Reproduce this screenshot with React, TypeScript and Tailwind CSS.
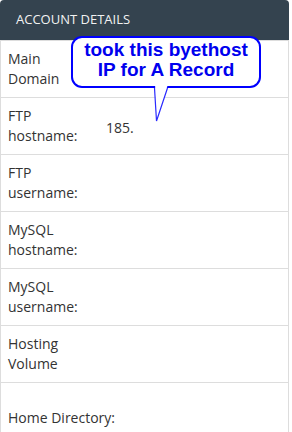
import React from "react";

type Row = { label: React.ReactNode; value?: string; tall?: boolean };

const rows: Row[] = [
  { label: <>Main<br />Domain</> },
  { label: <>FTP<br />hostname:</>, value: "185." },
  { label: <>FTP<br />username:</> },
  { label: <>MySQL<br />hostname:</> },
  { label: <>MySQL<br />username:</> },
  { label: <>Hosting<br />Volume</> },
  { label: <>Home Directory:</>, tall: true },
];

const Callout: React.FC = () => (
  <div className="absolute left-[71px] top-[36px]">
    <div className="w-[190px] h-[52px] rounded-[11px] border-2 border-[#0000ff] bg-white pt-[2px] text-center text-[19px] leading-[20px] font-bold text-[#0000ee] [font-family:'Liberation_Sans',Arial,sans-serif]">
      took this byethost
      <br />
      IP for A Record
    </div>
    <svg
      className="absolute left-[79px] top-[48px]"
      width="22"
      height="44"
      viewBox="0 0 22 44"
    >
      <path d="M5 0 L7 37 L18 0 Z" fill="white" />
      <path d="M4.5 4 L6.5 37 L17.5 4" fill="none" stroke="#2a2aff" strokeWidth="1.2" />
    </svg>
  </div>
);

export default function App() {
  return (
    <div className="relative w-[292px] h-[432px] overflow-hidden bg-white [font-family:'Open_Sans',sans-serif]">
      <div className="w-[289px]">
        <div className="h-[40px] rounded-t-[4px] bg-[#34434f] pl-[16px] flex items-center text-[13px] text-[#f2f2f2] uppercase">
          Account Details
        </div>
        <div className="border-x border-[#dddddd]">
          {rows.map((r, i) =>
            r.tall ? (
              <div
                key={i}
                className="h-[80px] border-t border-[#dddddd] pt-[25px] pl-[7px] text-[14px] leading-[20px] text-[#333] whitespace-nowrap"
              >
                {r.label}
              </div>
            ) : (
              <div
                key={i}
                className="flex items-center h-[57px] border-t border-[#dddddd] text-[14px] leading-[20px] text-[#333]"
              >
                <div className="w-[98px] pl-[7px]">{r.label}</div>
                <div className="pl-[7px] pt-[3px]">{r.value}</div>
              </div>
            )
          )}
        </div>
      </div>
      <Callout />
    </div>
  );
}
